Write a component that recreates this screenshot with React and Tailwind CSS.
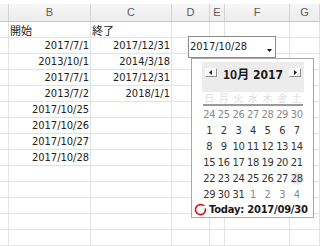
import React from "react";

const NUM = { fontFamily: '"DejaVu Sans Condensed","DejaVu Sans",sans-serif' };
const JP = { fontFamily: '"Noto Sans CJK JP",sans-serif' };
const HDR = { fontFamily: '"Liberation Sans",Arial,sans-serif' };

const COLS = [
  { k: "", w: "w-[9px]" },
  { k: "B", w: "w-[82px]" },
  { k: "C", w: "w-[81px]" },
  { k: "D", w: "w-[38px]" },
  { k: "E", w: "w-[15px]" },
  { k: "F", w: "w-[65px]" },
  { k: "G", w: "flex-1" },
];

const ROWS = [
  ["開始", "終了"],
  ["2017/7/1", "2017/12/31"],
  ["2013/10/1", "2014/3/18"],
  ["2017/7/1", "2017/12/31"],
  ["2013/7/2", "2018/1/1"],
  ["2017/10/25", ""],
  ["2017/10/26", ""],
  ["2017/10/27", ""],
  ["2017/10/28", ""],
  ["", ""],
  ["", ""],
  ["", ""],
  ["", ""],
  ["", ""],
];

const WEEKS = [
  [["24", 1], ["25", 1], ["26", 1], ["27", 1], ["28", 1], ["29", 1], ["30", 1]],
  [["1"], ["2"], ["3"], ["4"], ["5"], ["6"], ["7"]],
  [["8"], ["9"], ["10"], ["11"], ["12"], ["13"], ["14"]],
  [["15"], ["16"], ["17"], ["18"], ["19"], ["20"], ["21"]],
  [["22"], ["23"], ["24"], ["25"], ["26"], ["27"], ["28", 0, 1]],
  [["29"], ["30"], ["31"], ["1", 1], ["2", 1], ["3", 1], ["4", 1]],
];

function ArrowBtn({ dir }) {
  return (
    <div className="w-[12px] h-[9px] bg-[#f7f7f7] border border-t-white border-l-white border-r-[#8c8c8c] border-b-[#8c8c8c] flex items-center justify-center">
      <svg width="4" height="5" viewBox="0 0 4 5">
        {dir === "l" ? (
          <polygon points="3,0 3,5 0,2.5" fill="#222" />
        ) : (
          <polygon points="1,0 1,5 4,2.5" fill="#222" />
        )}
      </svg>
    </div>
  );
}

function Calendar() {
  return (
    <div className="absolute left-[191px] top-[58px] w-[123px] h-[160px] border border-[#a8a8a8] bg-white">
      <div className="mt-[3px] ml-[10px] w-[102px] h-[30px] bg-[#ececec] flex items-start justify-between pt-[6px] px-[3px]">
        <ArrowBtn dir="l" />
        <div className="text-[12px] font-bold text-[#1a1a1a] leading-[12px]" style={NUM}>
          <span style={JP}>10月</span> 2017
        </div>
        <ArrowBtn dir="r" />
      </div>
      <div className="ml-[10px] w-[102px] h-[12px] grid grid-cols-7 text-[10px] leading-[12px] text-[#e0e0e0]" style={JP}>
        {"日月火水木金土".split("").map((d) => (
          <div key={d} className="text-center">{d}</div>
        ))}
      </div>
      <div className="ml-[11px] w-[100px] h-[2px] bg-[#9a9a9a]" />
      <div className="ml-[10px] w-[102px]" style={NUM}>
        {WEEKS.map((w, i) => (
          <div key={i} className="grid grid-cols-7 h-[16px]">
            {w.map(([d, other, sel], j) => (
              <div key={j} className="flex items-center justify-center">
                <span
                  className={
                    "text-[11px] leading-[13px] tracking-[-0.3px] " +
                    (other ? "text-[#8a8a8a] " : "text-[#333] ") +
                    (sel ? "bg-[#e8e8e8] rounded-full" : "")
                  }
                >
                  {d}
                </span>
              </div>
            ))}
          </div>
        ))}
      </div>
      <div className="h-[15px] flex items-center pl-[2px]">
        <svg width="13" height="13" viewBox="0 0 13 13" className="shrink-0">
          <path d="M8.6 2.1 A5 5 0 1 0 11.3 5.4" fill="none" stroke="#e01010" strokeWidth="1.6" />
          <path d="M8.2 1.6 L10.4 2.6" fill="none" stroke="#e01010" strokeWidth="1.3" />
        </svg>
        <span className="ml-[2px] text-[10px] font-bold text-[#1a1a1a] leading-[12px] tracking-[-0.25px]" style={{ fontFamily: '"DejaVu Sans",sans-serif' }}>
          Today: 2017/09/30
        </span>
      </div>
    </div>
  );
}

function Combo() {
  return (
    <div className="absolute left-[188px] top-[36px] w-[88px] h-[22px] border border-[#8a8a8a] bg-white flex">
      <div className="flex-1 pl-[1px] text-[11px] leading-[20px] text-[#222]" style={NUM}>
        2017/10/28
      </div>
      <div className="w-[11px] flex items-end justify-center pb-[5px]">
        <svg width="5" height="3" viewBox="0 0 5 3">
          <polygon points="0,0 5,0 2.5,3" fill="#111" />
        </svg>
      </div>
    </div>
  );
}

export default function App() {
  return (
    <div className="relative w-[320px] h-[246px] overflow-hidden bg-white">
      <div className="h-[4px] bg-white" />
      <div className="flex h-[18px] border-b border-[#c9c9c9] bg-gradient-to-b from-[#f7f7f7] to-[#ececec]">
        {COLS.map((c, i) => (
          <div
            key={i}
            className={c.w + " h-full border-r border-[#d4d4d4] flex items-center justify-center text-[11px] text-[#5c5c5c]"}
            style={HDR}
          >
            {c.k}
          </div>
        ))}
      </div>
      {ROWS.map((r, ri) => (
        <div key={ri} className="flex h-[16px] border-b border-[#e3e3e3]">
          {COLS.map((c, ci) => {
            let content = null;
            let align = "justify-end pr-[1px]";
            if (ci === 1) content = r[0];
            if (ci === 2) content = r[1];
            const jp = ri === 0;
            if (jp) align = "justify-start pl-[1px]";
            return (
              <div
                key={ci}
                className={c.w + " h-full border-r border-[#e3e3e3] flex items-end " + align}
              >
                {content ? (
                  <span
                    className={"text-[#222] whitespace-nowrap text-[11px] leading-[14px]"}
                    style={jp ? JP : NUM}
                  >
                    {content}
                  </span>
                ) : null}
              </div>
            );
          })}
        </div>
      ))}
      <Combo />
      <Calendar />
    </div>
  );
}
